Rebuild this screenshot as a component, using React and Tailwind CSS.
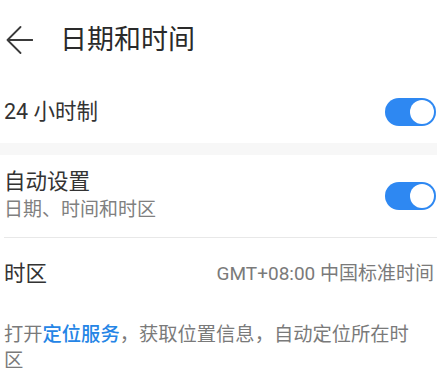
import React from "react";

function Toggle() {
  return (
    <div className="flex h-[28px] w-[51px] shrink-0 items-center justify-end rounded-full bg-[#2e88f2] p-[2px]">
      <div className="h-[24px] w-[24px] rounded-full bg-white" />
    </div>
  );
}

export default function App() {
  const font = { fontFamily: 'Roboto, "Noto Sans CJK SC", sans-serif' };
  return (
    <div className="h-[385px] w-[437px] overflow-hidden bg-white text-[#333333]" style={font}>
      <div className="flex h-[80px] items-center">
        <svg className="ml-[6px] mr-[27px] shrink-0" width="27" height="28" viewBox="0 0 27 28" fill="none">
          <path d="M1.5 14 H26.5 M14.5 1 L1.5 14 L14.5 27" stroke="#3a3a3a" strokeWidth="1.8" strokeLinecap="round" strokeLinejoin="round" />
        </svg>
        <span className="text-[27px] leading-none text-[#2a2a2a]">日期和时间</span>
      </div>

      <div className="flex h-[63px] items-center justify-between pl-[4px] pr-[1px]">
        <span className="text-[21.5px] leading-[28px]">24 小时制</span>
        <Toggle />
      </div>

      <div className="h-[12px] bg-[#f7f7f7]" />

      <div className="flex h-[82px] items-center justify-between pl-[4px] pr-[1px]">
        <div className="flex flex-col">
          <span className="text-[21.5px] leading-[28px]">自动设置</span>
          <span className="text-[19px] leading-[28px] text-[#808080]">日期、时间和时区</span>
        </div>
        <Toggle />
      </div>

      <div className="ml-[4px] h-px bg-[#e8e8e8]" />

      <div className="flex h-[72px] items-center justify-between pl-[4px] pr-[3px]">
        <span className="text-[21.5px] leading-[28px]">时区</span>
        <span className="text-[19px] leading-[28px] text-[#7a7a7a]">GMT+08:00 中国标准时间</span>
      </div>

      <div className="pl-[4px] pt-[12px]">
        <p className="w-[410px] text-[19.3px] leading-[26px] text-[#7a7a7a]">
          打开<span className="font-medium text-[#2585e6]">定位服务</span>，获取位置信息，自动定位所在时区
        </p>
      </div>
    </div>
  );
}
